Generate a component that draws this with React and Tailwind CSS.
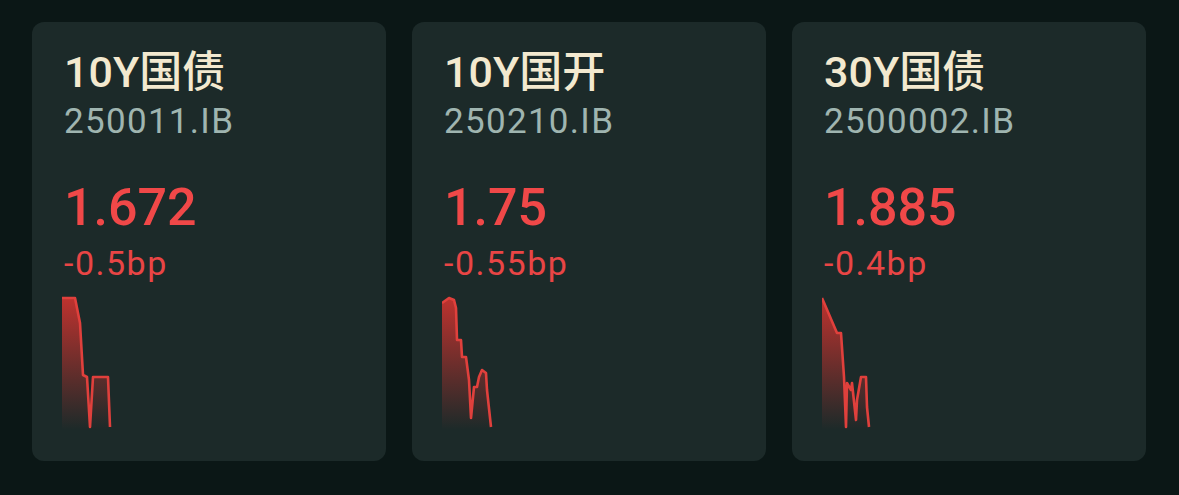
const bonds = [
  {
    name: "10Y国债",
    code: "250011.IB",
    yld: "1.672",
    chg: "-0.5bp",
    pts: [[0, 2], [13, 2], [16, 17], [18, 27], [21, 79], [25, 81], [28, 131], [31, 81], [46, 81], [48, 131]],
  },
  {
    name: "10Y国开",
    code: "250210.IB",
    yld: "1.75",
    chg: "-0.55bp",
    pts: [[0, 7], [7, 2], [12, 4], [14, 12], [15, 44], [19, 44], [20, 61], [24, 61], [27, 84], [29, 122], [32, 91], [35, 91], [37, 81], [40, 74], [44, 77], [45, 94], [49, 131]],
  },
  {
    name: "30Y国债",
    code: "2500002.IB",
    yld: "1.885",
    chg: "-0.4bp",
    pts: [[0, 2], [15, 37], [19, 37], [22, 81], [24, 131], [25, 87], [29, 94], [30, 87], [34, 124], [35, 104], [39, 81], [44, 81], [45, 111], [47, 131]],
  },
];

function Spark({ pts, id }) {
  const line = pts.map((p, i) => (i ? "L" : "M") + p[0] + " " + p[1]).join(" ");
  const last = pts[pts.length - 1];
  const area = line + ` L${last[0]} 134 L0 134 Z`;
  return (
    <svg width="60" height="134" viewBox="0 0 60 134" className="block">
      <defs>
        <linearGradient id={id} x1="0" y1="0" x2="0" y2="1">
          <stop offset="0%" stopColor="#d0332f" stopOpacity="0.9" />
          <stop offset="100%" stopColor="#d0332f" stopOpacity="0" />
        </linearGradient>
      </defs>
      <path d={area} fill={`url(#${id})`} />
      <path d={line} fill="none" stroke="#e0403c" strokeWidth="2.6" strokeLinejoin="round" />
    </svg>
  );
}

export default function App() {
  return (
    <div className="w-[1179px] h-[495px] bg-[#0b1716] flex gap-[26px] pl-8 pt-[22px]"
      style={{ fontFamily: "Roboto, 'Noto Sans CJK SC', sans-serif" }}>
      {bonds.map((b, i) => (
        <div key={b.code} className="w-[354px] h-[439px] rounded-xl bg-[#1c2a29] pl-8 pt-[29px] flex flex-col">
          <div className="text-[43px] leading-[43px] font-medium text-[#f3e9cf]">{b.name}</div>
          <div className="text-[35px] leading-[35px] text-[#9fb5b0] mt-[10px] tracking-[1.3px]">{b.code}</div>
          <div className="text-[52px] leading-[52px] font-medium text-[#f04848] mt-[43px]">{b.yld}</div>
          <div className="text-[34px] leading-[34px] text-[#e94545] mt-[12px] tracking-[1.5px]">{b.chg}</div>
          <div className="mt-[16px] -ml-[2px]">
            <Spark pts={b.pts} id={"g" + i} />
          </div>
        </div>
      ))}
    </div>
  );
}
